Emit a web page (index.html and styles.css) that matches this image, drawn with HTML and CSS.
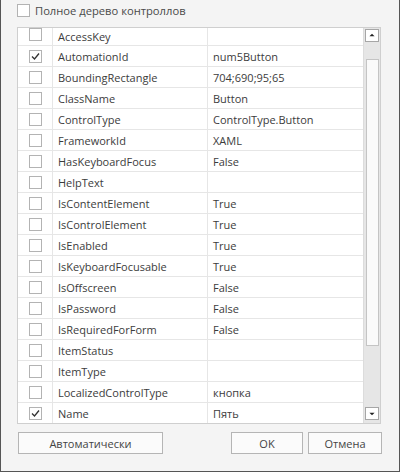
FILE: index.html
```html
<!DOCTYPE html>
<html>
<head>
<meta charset="utf-8">
<link rel="stylesheet" href="styles.css">
</head>
<body>
<div class="window">
  <div class="top">
    <span class="cb"></span>
    <span class="top-label">Полное дерево контроллов</span>
  </div>
  <div class="grid">
    <div class="rows-view">
      <div class="rows">
        <div class="row first"><div class="c1"><span class="cb"></span></div><div class="c2">AccessKey</div><div class="c3"></div></div>
        <div class="row"><div class="c1"><span class="cb checked"><svg viewBox="0 0 11 11"><polyline points="2,5.5 4.5,8 9,2.5"/></svg></span></div><div class="c2">AutomationId</div><div class="c3">num5Button</div></div>
        <div class="row"><div class="c1"><span class="cb"></span></div><div class="c2">BoundingRectangle</div><div class="c3">704;690;95;65</div></div>
        <div class="row"><div class="c1"><span class="cb"></span></div><div class="c2">ClassName</div><div class="c3">Button</div></div>
        <div class="row"><div class="c1"><span class="cb"></span></div><div class="c2">ControlType</div><div class="c3">ControlType.Button</div></div>
        <div class="row"><div class="c1"><span class="cb"></span></div><div class="c2">FrameworkId</div><div class="c3">XAML</div></div>
        <div class="row"><div class="c1"><span class="cb"></span></div><div class="c2">HasKeyboardFocus</div><div class="c3">False</div></div>
        <div class="row"><div class="c1"><span class="cb"></span></div><div class="c2">HelpText</div><div class="c3"></div></div>
        <div class="row"><div class="c1"><span class="cb"></span></div><div class="c2">IsContentElement</div><div class="c3">True</div></div>
        <div class="row"><div class="c1"><span class="cb"></span></div><div class="c2">IsControlElement</div><div class="c3">True</div></div>
        <div class="row"><div class="c1"><span class="cb"></span></div><div class="c2">IsEnabled</div><div class="c3">True</div></div>
        <div class="row"><div class="c1"><span class="cb"></span></div><div class="c2">IsKeyboardFocusable</div><div class="c3">True</div></div>
        <div class="row"><div class="c1"><span class="cb"></span></div><div class="c2">IsOffscreen</div><div class="c3">False</div></div>
        <div class="row"><div class="c1"><span class="cb"></span></div><div class="c2">IsPassword</div><div class="c3">False</div></div>
        <div class="row"><div class="c1"><span class="cb"></span></div><div class="c2">IsRequiredForForm</div><div class="c3">False</div></div>
        <div class="row"><div class="c1"><span class="cb"></span></div><div class="c2">ItemStatus</div><div class="c3"></div></div>
        <div class="row"><div class="c1"><span class="cb"></span></div><div class="c2">ItemType</div><div class="c3"></div></div>
        <div class="row"><div class="c1"><span class="cb"></span></div><div class="c2">LocalizedControlType</div><div class="c3">кнопка</div></div>
        <div class="row last"><div class="c1"><span class="cb checked"><svg viewBox="0 0 11 11"><polyline points="2,5.5 4.5,8 9,2.5"/></svg></span></div><div class="c2">Name</div><div class="c3">Пять</div></div>
      </div>
    </div>
    <div class="scrollbar">
      <div class="sb-btn"><svg viewBox="0 0 14 12"><polygon points="4,7 10,7 7,4"/></svg></div>
      <div class="sb-gap-top"></div>
      <div class="sb-thumb"></div>
      <div class="sb-gap-bottom"></div>
      <div class="sb-btn"><svg viewBox="0 0 14 12"><polygon points="4,5 10,5 7,8"/></svg></div>
    </div>
  </div>
  <div class="buttons">
    <button class="btn btn-auto">Автоматически</button>
    <button class="btn btn-ok">OK</button>
    <button class="btn btn-cancel">Отмена</button>
  </div>
</div>
</body>
</html>
```

FILE: styles.css
```css
html, body {
  margin: 0;
  padding: 0;
}
body {
  width: 400px;
  height: 472px;
  overflow: hidden;
  font-family: "Open Sans", "Noto Sans", sans-serif;
  font-size: 11px;
  color: #3c3c3c;
}
.window {
  box-sizing: border-box;
  width: 400px;
  height: 472px;
  background: #f4f4f4;
  border-left: 1px solid #555;
  border-right: 1px solid #555;
  border-bottom: 1px solid #555;
  padding-left: 16px;
}
.top {
  height: 27px;
  display: flex;
  align-items: flex-start;
  padding-top: 4px;
  box-sizing: border-box;
}
.top-label {
  margin-left: 5px;
  line-height: 13px;
  font-size: 11.2px;
  color: #4a4a4a;
}
.cb {
  display: inline-flex;
  align-items: center;
  justify-content: center;
  box-sizing: border-box;
  width: 13px;
  height: 13px;
  border: 1px solid #b3b3b3;
  background: #fff;
  flex: none;
}
.cb svg {
  width: 11px;
  height: 11px;
}
.cb polyline {
  fill: none;
  stroke: #333;
  stroke-width: 1.3;
}
.grid {
  box-sizing: border-box;
  width: 364px;
  height: 397px;
  border: 1px solid #cfcfcf;
  display: flex;
  background: #fff;
}
.rows-view {
  width: 345px;
  height: 395px;
  overflow: hidden;
}
.row {
  display: flex;
  height: 20px;
  border-bottom: 1px solid #e6e6e6;
}
.row.first {
  height: 17px;
}
.row.last {
  border-bottom: none;
}
.c1 {
  width: 34px;
  border-right: 1px solid #e6e6e6;
  display: flex;
  align-items: center;
  justify-content: center;
}
.row.first .c1 {
  align-items: flex-start;
}
.c2 {
  width: 149px;
  padding-left: 5px;
  border-right: 1px solid #e6e6e6;
  display: flex;
  align-items: center;
  white-space: nowrap;
  overflow: hidden;
}
.c3 {
  flex: 1;
  padding-left: 5px;
  display: flex;
  align-items: center;
  white-space: nowrap;
}
.scrollbar {
  box-sizing: border-box;
  width: 17px;
  height: 395px;
  border-left: 1px solid #dcdcdc;
  background: #e6e6e6;
  display: flex;
  flex-direction: column;
  align-items: center;
  padding-top: 1px;
}
.sb-btn {
  box-sizing: border-box;
  width: 14px;
  height: 13px;
  background: #fff;
  border: 1px solid #a6a6a6;
  display: flex;
}
.sb-btn svg {
  width: 12px;
  height: 11px;
}
.sb-btn polygon {
  fill: #222;
}
.sb-gap-top {
  height: 17px;
}
.sb-thumb {
  box-sizing: border-box;
  width: 13px;
  height: 287px;
  background: #fafafa;
  border: 1px solid #c4c4c4;
}
.sb-gap-bottom {
  height: 61px;
}
.buttons {
  display: flex;
  margin-top: 8px;
  width: 365px;
}
.btn {
  box-sizing: border-box;
  height: 22px;
  border: 1px solid #b5b5b5;
  background: #fbfbfb;
  font-family: "Open Sans", "Noto Sans", sans-serif;
  font-size: 11px;
  color: #444;
  padding: 0;
}
.btn-auto {
  width: 145px;
  margin-left: 1px;
}
.btn-ok {
  width: 72px;
  margin-left: auto;
}
.btn-cancel {
  width: 74px;
  margin-left: 5px;
}
```
